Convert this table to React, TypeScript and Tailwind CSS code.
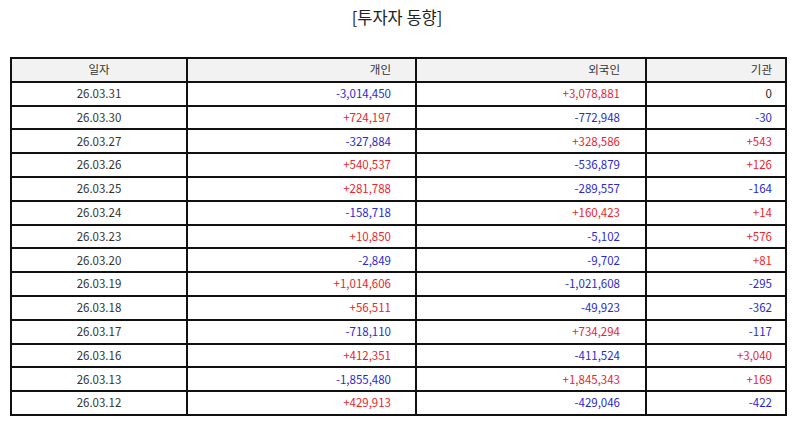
import React from "react";

type Row = [string, string, string, string];

const rows: Row[] = [
  ["26.03.31", "-3,014,450", "+3,078,881", "0"],
  ["26.03.30", "+724,197", "-772,948", "-30"],
  ["26.03.27", "-327,884", "+328,586", "+543"],
  ["26.03.26", "+540,537", "-536,879", "+126"],
  ["26.03.25", "+281,788", "-289,557", "-164"],
  ["26.03.24", "-158,718", "+160,423", "+14"],
  ["26.03.23", "+10,850", "-5,102", "+576"],
  ["26.03.20", "-2,849", "-9,702", "+81"],
  ["26.03.19", "+1,014,606", "-1,021,608", "-295"],
  ["26.03.18", "+56,511", "-49,923", "-362"],
  ["26.03.17", "-718,110", "+734,294", "-117"],
  ["26.03.16", "+412,351", "-411,524", "+3,040"],
  ["26.03.13", "-1,855,480", "+1,845,343", "+169"],
  ["26.03.12", "+429,913", "-429,046", "-422"],
];

function color(v: string) {
  if (v.startsWith("+")) return "text-[#e8262b]";
  if (v.startsWith("-")) return "text-[#2a2ad0]";
  return "text-[#222]";
}

export default function App() {
  return (
    <div
      className="w-[794px] h-[425px] bg-white"
      style={{ fontFamily: '"Noto Sans CJK KR", "Noto Sans", sans-serif' }}
    >
      <div className="h-[57px] pt-[4px] text-center text-[16.5px] leading-[26px] text-[#222]">
        [투자자 동향]
      </div>
      <table className="ml-[10px] w-[775px] border-collapse text-[11.5px] text-[#333] table-fixed">
        <colgroup>
          <col className="w-[176px]" />
          <col className="w-[229px]" />
          <col className="w-[230px]" />
          <col className="w-[140px]" />
        </colgroup>
        <thead>
          <tr className="h-[23.8px] bg-[#f2f2f2]">
            <th className="border-2 border-[#111] font-normal text-center p-0 leading-none">일자</th>
            <th className="border-2 border-[#111] font-normal text-right p-0 pr-[24px] leading-none">개인</th>
            <th className="border-2 border-[#111] font-normal text-right p-0 pr-[25px] leading-none">외국인</th>
            <th className="border-2 border-[#111] font-normal text-right p-0 pr-[13px] leading-none">기관</th>
          </tr>
        </thead>
        <tbody>
          {rows.map((r) => (
            <tr key={r[0]} className="h-[23.8px]">
              <td className="border-2 border-[#111] text-center p-0 leading-none">{r[0]}</td>
              <td className={`border-2 border-[#111] text-right p-0 pr-[24px] leading-none ${color(r[1])}`}>{r[1]}</td>
              <td className={`border-2 border-[#111] text-right p-0 pr-[25px] leading-none ${color(r[2])}`}>{r[2]}</td>
              <td className={`border-2 border-[#111] text-right p-0 pr-[13px] leading-none ${color(r[3])}`}>{r[3]}</td>
            </tr>
          ))}
        </tbody>
      </table>
    </div>
  );
}
